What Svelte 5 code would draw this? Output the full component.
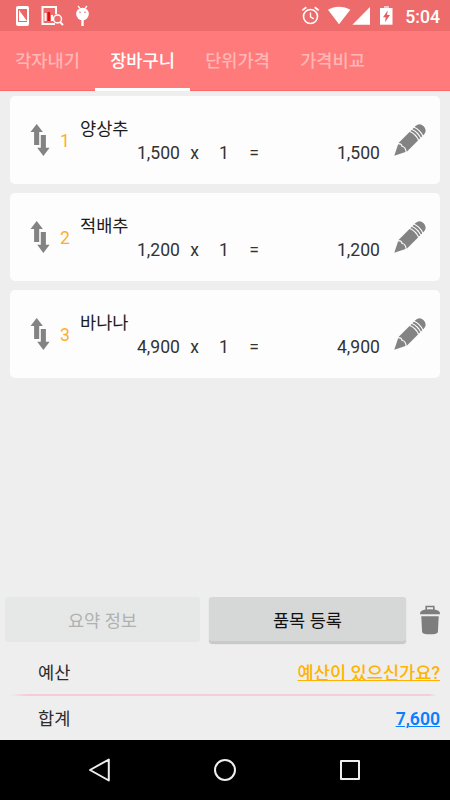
<script lang="ts">
	const tabs = ['각자내기', '장바구니', '단위가격', '가격비교'];

	let activeTab = $state('장바구니');

	const items = [
		{ id: 1, name: '양상추', price: 1500, count: 1 },
		{ id: 2, name: '적배추', price: 1200, count: 1 },
		{ id: 3, name: '바나나', price: 4900, count: 1 }
	];

	const total = items.reduce((sum, item) => sum + item.price * item.count, 0);

	const format = (value: number) => value.toLocaleString('en-US');
</script>

<div class="screen">
	<header class="status">
		<div class="status__left">
			<svg width="80" height="31" viewBox="0 0 80 31">
				<rect x="1" y="6" width="13" height="20" rx="2" fill="#fff" />
				<path d="M3 9h9v13H3z" fill="#e96868" />
				<path d="M4 10v11h8z" fill="#fff" />
				<path d="M41 14V7H27.500v17H40" fill="none" stroke="#fff" stroke-width="2" />
				<path d="M29.500 13h2v8h-2zM36 15h2v6h-2z" fill="#fff" />
				<path d="M32.500 12h2.600v9h-2.600z" fill="#dc1010" />
				<circle cx="42.500" cy="19" r="4" fill="#ee6b6b" stroke="#fff" stroke-width="1.500" />
				<path d="M45 22l3 3" stroke="#fff" stroke-width="2" />
				<path d="M63 6l2.500 3M72 6l-2.500 3" stroke="#fff" stroke-width="1.200" />
				<circle cx="67.500" cy="14" r="6.300" fill="#fff" />
				<path d="M67.500 20v6" stroke="#fff" stroke-width="2.400" />
				<circle cx="65" cy="12.300" r=".8" fill="#e96868" />
				<circle cx="70" cy="12.300" r=".8" fill="#e96868" />
			</svg>
		</div>
		<div class="status__right">
			<svg width="94" height="31" viewBox="0 0 94 31">
				<g fill="none" stroke="#fff">
					<circle cx="10.500" cy="16.500" r="7" stroke-width="1.600" />
					<path d="M2.300 10.400l4-3.200M18.700 10.400l-4-3.200" stroke-width="1.800" />
					<path d="M10.500 12.500v4.300l3.300 2" stroke-width="1.400" />
				</g>
				<path d="M28 9.800C34.500 5.600 43.500 5.600 50.300 9.800L39 24.200z" fill="#fff" />
				<path d="M70 7v17.700H52.400z" fill="#fff" />
				<path d="M84 6h5v2h-5z" fill="#f9c4c4" />
				<path d="M80 8h12.500v16.700H80z" fill="#fff" />
				<path d="M87.700 10.500L83 17.200h2.700l-.7 5 5-7.200h-2.900z" fill="#e35f5f" />
			</svg>
			<span class="clock">5:04</span>
		</div>
	</header>

	<nav class="tabs">
		{#each tabs as tab (tab)}
			<button class="tab" class:tab--active={tab === activeTab} onclick={() => (activeTab = tab)}>
				{tab}
			</button>
		{/each}
	</nav>

	<main class="list">
		{#each items as item (item.id)}
			<article class="card">
				<svg class="card__sort" width="20" height="34" viewBox="0 0 20 34">
					<path d="M6.700 1l6.200 8H9.200v13H4.100V9H.5z" fill="#838383" />
					<path d="M10.800 12h5.100v12.800h3.700L13.400 33l-6.200-8.200h3.600z" fill="#838383" />
				</svg>
				<span class="card__index">{item.id}</span>
				<div class="card__body">
					<div class="card__name">{item.name}</div>
					<div class="card__sum">
						<span class="price">{format(item.price)}</span>
						<span class="times">x</span>
						<span class="count">{item.count}</span>
						<span class="equals">=</span>
						<span class="amount">{format(item.price * item.count)}</span>
					</div>
				</div>
				<svg class="card__edit" width="34" height="34" viewBox="0 0 34 34">
					<g transform="translate(1.300 32.700) rotate(-45)">
						<path d="M0 0L12 -6H36Q41.500 -5.500 41.500 0T36 6H12z" fill="#838383" />
						<path
							d="M10.500 -6.500Q14 -3.500 12 -1Q14.500 1.500 10.500 6.500M28 -6.500Q30.500 0 28 6.500M31 -6.500Q33.500 0 31 6.500M34 -6.500Q36.500 0 34 6.500"
							fill="none"
							stroke="#fdfdfd"
							stroke-width="1.200"
						/>
					</g>
				</svg>
			</article>
		{/each}
	</main>

	<section class="actions">
		<button class="btn btn--disabled" disabled>요약 정보</button>
		<button class="btn btn--add">품목 등록</button>
		<button class="trash" aria-label="삭제">
			<svg width="22" height="30" viewBox="0 0 22 30">
				<path d="M7.200 5V1.500h7.600V5" fill="none" stroke="#7d7d7d" stroke-width="1.600" />
				<path d="M1 9.300Q.2 4.300 11 4.300T21 9.300z" fill="#7d7d7d" />
				<path d="M2.300 11.300h17.400l-.8 15.700Q18.600 29.300 11 29.300T3.100 27z" fill="#7d7d7d" />
			</svg>
		</button>
	</section>

	<section class="summary">
		<div class="summary__row">
			<span>예산</span>
			<a class="budget" href="#budget">예산이 있으신가요?</a>
		</div>
		<div class="divider"></div>
		<div class="summary__row">
			<span>합계</span>
			<a class="total" href="#total">{format(total)}</a>
		</div>
	</section>

	<footer class="navbar">
		<svg width="24" height="26" viewBox="0 0 24 26">
			<path d="M20.800 2.500v21L2 13z" />
		</svg>
		<svg width="24" height="26" viewBox="0 0 24 26">
			<circle cx="12" cy="13" r="10" />
		</svg>
		<svg width="24" height="26" viewBox="0 0 24 26">
			<rect x="3" y="4" width="18" height="18" />
		</svg>
	</footer>
</div>

<style>
	:global(body) {
		margin: 0;
	}

	.screen {
		display: flex;
		flex-direction: column;
		width: 450px;
		height: 800px;
		overflow: hidden;
		background: #eee;
		color: #2b2b2b;
		font-family: Roboto, 'Noto Sans CJK KR', sans-serif;
		font-size: 17.6px;
		line-height: 24px;
	}

	svg {
		display: block;
		flex: none;
	}

	button {
		padding: 0;
		border: 0;
		background: none;
		color: inherit;
		font: inherit;
	}

	.status {
		display: flex;
		justify-content: space-between;
		height: 31px;
		padding: 0 10px 0 15px;
		background: #ee6b6b;
	}

	.status__right {
		display: flex;
		gap: 11px;
	}

	.clock {
		color: #fff;
		font-weight: 500;
		line-height: 34px;
	}

	.tabs {
		display: flex;
		height: 60px;
		box-sizing: border-box;
		border-bottom: 1px solid #ff6666;
		background: #ff7b7b;
	}

	.tab {
		width: 95px;
		height: 60px;
		padding-top: 2px;
		box-sizing: border-box;
		border-bottom: 3px solid transparent;
		color: #ffb6b6;
		font-weight: 500;
	}

	.tab--active {
		border-bottom-color: #fff;
		color: #fff;
	}

	.list {
		display: flex;
		flex: 1;
		flex-direction: column;
		gap: 9px;
		padding: 5px 10px 0;
	}

	.card {
		display: flex;
		align-items: center;
		height: 88px;
		padding: 0 13px 0 20px;
		box-sizing: border-box;
		border-radius: 5px;
		background: #fdfdfd;
	}

	.card__index {
		width: 30px;
		padding: 2px 0 0 1px;
		box-sizing: border-box;
		color: #ffae2b;
		text-align: center;
	}

	.card__body {
		width: 300px;
		padding: 2px 0 0 1px;
		box-sizing: border-box;
	}

	.card__sum {
		display: grid;
		grid-template-columns: 100px 29px 30px 30px 111px;
		color: #333;
	}

	.price,
	.amount {
		text-align: right;
	}

	.times,
	.count,
	.equals {
		text-align: center;
	}

	.card__name {
		color: #1c1c1c;
	}

	.card__edit {
		margin-left: 14px;
	}

	.actions {
		display: flex;
		align-items: flex-start;
		height: 53px;
		padding: 0 9px 0 5px;
	}

	.btn {
		padding-top: 2px;
		border-radius: 3px;
	}

	.btn--disabled {
		width: 195px;
		height: 45px;
		margin-right: 9px;
		background: #e6e8e7;
		color: #b0b1b1;
	}

	.btn--add {
		width: 197px;
		height: 46px;
		background: #d6d8d7;
		box-shadow:
			inset 0 -2px 0 #c9cbca,
			0 1px 1px #c4c4c4;
		color: #111;
	}

	.trash {
		margin: 8px 0 0 13px;
	}

	.summary {
		height: 90px;
	}

	.summary__row {
		display: flex;
		align-items: center;
		justify-content: space-between;
		height: 44px;
		padding: 2px 10px 0 38px;
		box-sizing: border-box;
	}

	.budget,
	.total {
		font-weight: 500;
		text-decoration-thickness: 1px;
	}

	.budget {
		color: #ffb300;
	}

	.total {
		color: #087fff;
		font-weight: 600;
	}

	.divider {
		height: 2px;
		margin: 0 13px 0 10px;
		background: linear-gradient(90deg, transparent, #f5cbdc 4%, #f2cddd 98%, transparent);
	}

	.navbar {
		display: flex;
		align-items: center;
		justify-content: center;
		gap: 101px;
		height: 60px;
		background: #000;
	}

	.navbar path,
	.navbar circle,
	.navbar rect {
		fill: none;
		stroke: #eee;
		stroke-width: 2;
		stroke-linejoin: round;
	}
</style>
